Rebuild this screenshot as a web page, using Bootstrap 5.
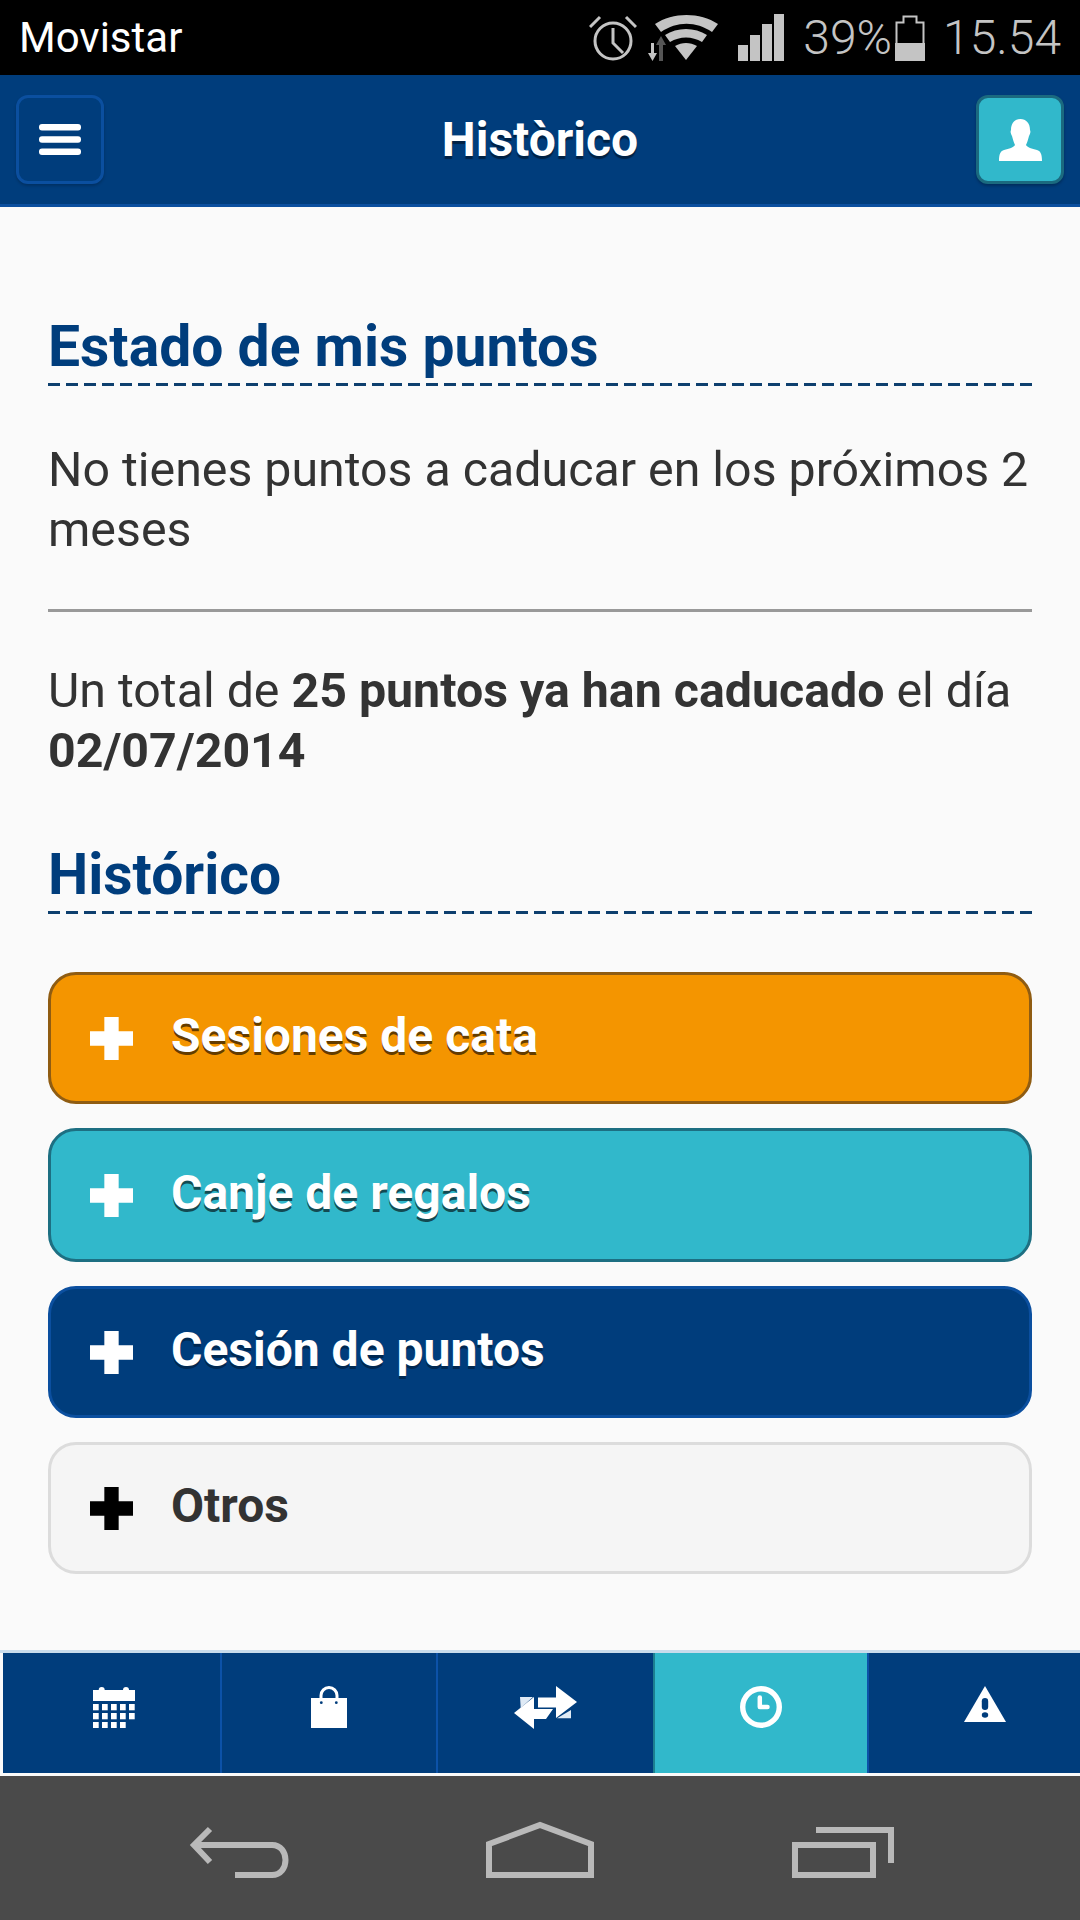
<!DOCTYPE html>
<html lang="es">
<head>
<meta charset="utf-8">
<title>Histórico</title>
<link href="https://cdn.jsdelivr.net/npm/bootstrap@5.3.0/dist/css/bootstrap.min.css" rel="stylesheet">
<style>
html,body{height:1920px;overflow:hidden}
body{background:#fafafa;font-family:Roboto,"Liberation Sans",sans-serif;color:#333;display:flex;flex-direction:column}
.sbar{height:75px;background:#000;color:#c4c4c4;padding:0 19px;flex:none}
.sbar-car{color:#fff;font-size:42px;font-weight:400;line-height:80px}
.sbar-txt{font-size:48px;font-weight:300;line-height:78px}
.sbar svg{display:block;flex:none}
.gap-a{margin-left:11px}.gap-b{margin-left:20px}.gap-c{margin-left:19px}.gap-d{margin-left:3px}.gap-e{margin-left:18px}
.app-head{height:132px;background:#003d7c;border-bottom:3px solid #0b4f9f;padding:0 16px;flex:none}
.hbtn{width:88px;height:89px;padding:0;border-radius:12px;display:flex;align-items:center;justify-content:center}
.hbtn-menu{background:#003d7c;border:3px solid #0b4f9f;box-shadow:0 2px 3px rgba(0,0,0,.2)}
.hbtn-user{background:#31b8cb;border:3px solid #1b6a7f;box-shadow:0 2px 3px rgba(0,0,0,.25)}
.app-title{font-size:48px;font-weight:700;color:#fff;text-shadow:0 3px 1px rgba(0,0,0,.45);margin:0}
.content{padding:0 48px;flex:1 1 auto}
.sect{font-size:57px;font-weight:700;color:#003d7c;line-height:60px;margin:0;padding-bottom:9px;background:repeating-linear-gradient(90deg,#0d3f6e 0 12px,transparent 12px 18px) left bottom/100% 3px no-repeat}
.sect-a{margin-top:110px}.sect-b{margin-top:64px}
.para{font-size:48.3px;line-height:60px;margin:0}
.para b{font-weight:700}
.para-a{margin-top:54px}.para-b{margin-top:49px}
.rule{border:0;border-top:3px solid #999;opacity:1;margin:49px 0 0}
.acc-list{margin-top:58px}
.acc{height:132px;border-radius:28px;padding:0 0 0 39px;font-size:48px;font-weight:700;gap:38px;width:100%;border:3px solid;color:#fff;text-shadow:0 3px 0 rgba(0,0,0,.6);text-align:left}
.acc svg{flex:none;width:43px;height:43px}
.acc-txt{margin-bottom:4px}
.acc-o{background:#f49500;border-color:#8f5c12}
.acc-t{background:#31b8cb;border-color:#1d6f82;height:134px}
.acc-n{background:#003d7c;border-color:#0b4f9f;text-shadow:0 3px 0 rgba(0,0,0,.35)}
.acc-g{background:#f5f5f5;border-color:#dcdcdc;color:#333;text-shadow:none}
.bnav{flex:none;background:#fafafa;padding:0 0 3px 3px;border-top:3px solid #c8dcec}
.bcell{background:#003d7c;border-left:2px solid #0c52a8;height:120px;display:flex;justify-content:center;padding-top:33px;flex:none}
.bcell:first-child{border-left:0}
.bcell-1{width:217px;padding-left:5px}
.bcell-2{width:216px}
.bcell-3{width:217px}
.bcell-4{width:214px;background:#31b8cb;border-left-color:#1d7f8f}
.bcell-5{flex:1 1 auto;padding-left:20px}
.andro{height:144px;background:#4a4a4a;flex:none}
.andro svg{display:block}
</style>
</head>
<body>
<div class="sbar d-flex align-items-center">
  <span class="sbar-car">Movistar</span>
  <div class="ms-auto d-flex align-items-center">
    <svg width="48" height="46" viewBox="0 0 48 46" fill="none" stroke="#c4c4c4" stroke-width="3"><circle cx="24" cy="26" r="18"/><path d="M24 13v15l10 10M1 12 11 2M47 12 37 2"/></svg>
    <svg class="gap-a" width="70" height="46" viewBox="0 0 70 46"><path d="M3 28h3v10h3l-4.500 8-4.500-8h3z" fill="#c4c4c4"/><path d="M11 46V30H8l5-9 5 9h-3v16z" fill="#555"/><path d="M7 9C25-3 52-3 70 9l-6 8C48 6 29 6 13 17z" fill="#c4c4c4"/><path d="M17 20c12-8 30-8 42 0l-5 7c-10-6-22-6-32 0z" fill="#c4c4c4"/><path d="M27 31c7-4 15-4 22 0L38 45z" fill="#c4c4c4"/></svg>
    <svg class="gap-b" width="46" height="47" viewBox="0 0 46 47" fill="#c4c4c4"><rect x="0" y="31" width="10" height="16"/><rect x="12" y="21" width="10" height="26"/><rect x="24" y="10" width="10" height="37"/><rect x="36" y="0" width="10" height="47"/></svg>
    <span class="sbar-txt gap-c">39%</span>
    <svg class="gap-d" width="30" height="46" viewBox="0 0 30 46"><path d="M1.500 7.500h7V1.500h13v6h7v37h-27z" fill="none" stroke="#c4c4c4" stroke-width="2"/><rect x="0" y="28" width="30" height="18" fill="#c4c4c4"/></svg>
    <span class="sbar-txt gap-e">15.54</span>
  </div>
</div>

<nav class="app-head navbar flex-nowrap justify-content-between">
  <button class="btn hbtn hbtn-menu" type="button" aria-label="Menú">
    <svg width="42" height="31" viewBox="0 0 42 31" fill="#fff"><rect width="42" height="6.500" rx="3"/><rect y="12.200" width="42" height="6.500" rx="3"/><rect y="24.500" width="42" height="6.500" rx="3"/></svg>
  </button>
  <h1 class="app-title">Històrico</h1>
  <button class="btn hbtn hbtn-user" type="button" aria-label="Usuario">
    <svg width="43" height="42" viewBox="0 0 43 42" fill="#fff"><path d="M21.500 0C27 0 31 4 31 11C32 13 31 15 30 17C29 21 28 24 27 26C28 28 33 30 38 31C41 32 43 34 43 42H0C0 34 2 32 5 31C10 30 15 28 16 26C15 24 14 21 13 17C12 15 11 13 12 11C12 4 16 0 21.500 0Z"/></svg>
  </button>
</nav>

<main class="content">
  <h2 class="sect sect-a">Estado de mis puntos</h2>
  <p class="para para-a">No tienes puntos a caducar en los próximos 2 meses</p>
  <hr class="rule">
  <p class="para para-b">Un total de <b>25 puntos ya han caducado</b> el día <b>02/07/2014</b></p>
  <h2 class="sect sect-b">Histórico</h2>
  <div class="acc-list d-flex flex-column gap-4">
    <button class="btn acc acc-o d-flex align-items-center" type="button"><svg viewBox="0 0 42 42" fill="#fff"><path d="M14 0h14v14h14v14H28v14H14V28H0V14h14z"/></svg><span class="acc-txt">Sesiones de cata</span></button>
    <button class="btn acc acc-t d-flex align-items-center" type="button"><svg viewBox="0 0 42 42" fill="#fff"><path d="M14 0h14v14h14v14H28v14H14V28H0V14h14z"/></svg><span class="acc-txt">Canje de regalos</span></button>
    <button class="btn acc acc-n d-flex align-items-center" type="button"><svg viewBox="0 0 42 42" fill="#fff"><path d="M14 0h14v14h14v14H28v14H14V28H0V14h14z"/></svg><span class="acc-txt">Cesión de puntos</span></button>
    <button class="btn acc acc-g d-flex align-items-center" type="button"><svg viewBox="0 0 42 42" fill="#000"><path d="M14 0h14v14h14v14H28v14H14V28H0V14h14z"/></svg><span class="acc-txt">Otros</span></button>
  </div>
</main>

<div class="bnav d-flex">
  <div class="bcell bcell-1"><svg width="42" height="42" viewBox="0 0 42 42" fill="#fff"><circle cx="8.700" cy="4" r="3"/><circle cx="33" cy="4" r="3"/><rect y="4" width="42" height="11"/><rect y="18" width="5.700" height="6.300"/><rect x="9" y="18" width="5.700" height="6.300"/><rect x="18" y="18" width="5.700" height="6.300"/><rect x="27" y="18" width="5.700" height="6.300"/><rect x="36" y="18" width="5.700" height="6.300"/><rect y="27" width="5.700" height="6.300"/><rect x="9" y="27" width="5.700" height="6.300"/><rect x="18" y="27" width="5.700" height="6.300"/><rect x="27" y="27" width="5.700" height="6.300"/><rect x="36" y="27" width="5.700" height="6.300"/><rect y="36" width="5.700" height="6"/><rect x="9" y="36" width="5.700" height="6"/><rect x="18" y="36" width="5.700" height="6"/><rect x="27" y="36" width="5.700" height="6"/></svg></div>
  <div class="bcell bcell-2"><svg width="36" height="42" viewBox="0 0 36 42"><path d="M0 12h36v30H0z" fill="#fff"/><path d="M10 13V9.500a8 8 0 0 1 16 0V13" fill="none" stroke="#fff" stroke-width="3"/><circle cx="10.300" cy="16.700" r="1.400" fill="#003d7c"/><circle cx="25.300" cy="16.700" r="1.400" fill="#003d7c"/></svg></div>
  <div class="bcell bcell-3"><svg width="64" height="44" viewBox="0 0 64 44"><path d="M6 11H19L6.700 22z" fill="#dfeaf5"/><path d="M57 24V32.300H43z" fill="#dfeaf5"/><path d="M42 0L63 16 42 32V21.500H24V11.500H42z" fill="#fff"/><path d="M20 11L0 27 20 43V33H32L39 23H20z" fill="#fff"/></svg></div>
  <div class="bcell bcell-4"><svg width="42" height="42" viewBox="0 0 42 42" fill="none" stroke="#fff"><circle cx="21" cy="21" r="18.300" stroke-width="5.400"/><path d="M19.800 11.500V21.100H27.500" stroke-width="4.500" stroke-linecap="round" stroke-linejoin="round"/></svg></div>
  <div class="bcell bcell-5"><svg width="42" height="36" viewBox="0 0 42 36"><path fill="#fff" d="M21 0L42 36H0Z"/><rect x="17.800" y="12" width="6.400" height="12" rx="3.200" fill="#003d7c"/><ellipse cx="21" cy="29" rx="3.200" ry="2.800" fill="#003d7c"/></svg></div>
</div>

<div class="andro">
  <svg width="1080" height="144" viewBox="0 0 1080 144" fill="none" stroke="#b9b9b9"><path d="M210 53 194 69 210 86" stroke-width="6"/><path d="M194 69H272C290 69 290 99 272 99H235" stroke-width="6"/><path d="M489 68L540 49 591 68V99H489Z" stroke-width="6"/><path d="M795 69H873V99H795Z" stroke-width="6"/><path d="M816 54H891V87" stroke-width="6"/></svg>
</div>
</body>
</html>
